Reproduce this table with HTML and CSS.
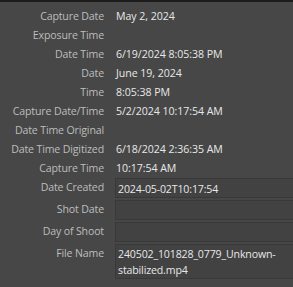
FILE: index.html
```html
<!DOCTYPE html>
<html>
<head>
<meta charset="utf-8">
<link rel="stylesheet" href="styles.css">
</head>
<body>
<div class="panel">
  <div class="row"><div class="label">Capture Date</div><div class="value">May 2, 2024</div></div>
  <div class="row"><div class="label">Exposure Time</div><div class="value"></div></div>
  <div class="row"><div class="label">Date Time</div><div class="value">6/19/2024 8:05:38 PM</div></div>
  <div class="row"><div class="label">Date</div><div class="value">June 19, 2024</div></div>
  <div class="row"><div class="label">Time</div><div class="value">8:05:38 PM</div></div>
  <div class="row"><div class="label">Capture Date/Time</div><div class="value">5/2/2024 10:17:54 AM</div></div>
  <div class="row"><div class="label">Date Time Original</div><div class="value"></div></div>
  <div class="row"><div class="label">Date Time Digitized</div><div class="value">6/18/2024 2:36:35 AM</div></div>
  <div class="row"><div class="label">Capture Time</div><div class="value">10:17:54 AM</div></div>
  <div class="row edit"><div class="label">Date Created</div><div class="box">2024-05-02T10:17:54</div></div>
  <div class="row edit"><div class="label">Shot Date</div><div class="box"></div></div>
  <div class="row edit"><div class="label">Day of Shoot</div><div class="box"></div></div>
  <div class="row edit"><div class="label">File Name</div><div class="box multi">240502_101828_0779_Unknown-<br>stabilized.mp4</div></div>
</div>
</body>
</html>
```

FILE: styles.css
```css
html, body {
  margin: 0;
  padding: 0;
  background: #474747;
}
body {
  width: 293px;
  height: 287px;
  overflow: hidden;
  font-family: "Open Sans", "Noto Sans", sans-serif;
  font-size: 10.6px;
}
.panel {
  border-top: 2px solid #1c1c1c;
  padding-top: 5px;
  display: flex;
  flex-direction: column;
}
.row {
  display: grid;
  grid-template-columns: 104px 1fr;
  column-gap: 11px;
  height: 19px;
  line-height: 19px;
}
.label {
  text-align: right;
  color: #bdbdbd;
  white-space: nowrap;
  letter-spacing: -0.15px;
}
.value {
  color: #e8e8e8;
  padding-left: 1px;
  white-space: nowrap;
  letter-spacing: -0.05px;
}
.row.edit {
  height: auto;
  margin-bottom: 2px;
  line-height: 18px;
}
.row.edit .label {
  padding-top: 0;
}
.box {
  box-sizing: border-box;
  height: 20px;
  background: #424242;
  border: 1px solid #393939;
  border-right: none;
  padding: 1px 0 0 2px;
  color: #e8e8e8;
  white-space: nowrap;
  line-height: 18px;
  letter-spacing: -0.15px;
}
.box.multi {
  height: 35px;
  line-height: 16px;
  padding-top: 1px;
}
```
